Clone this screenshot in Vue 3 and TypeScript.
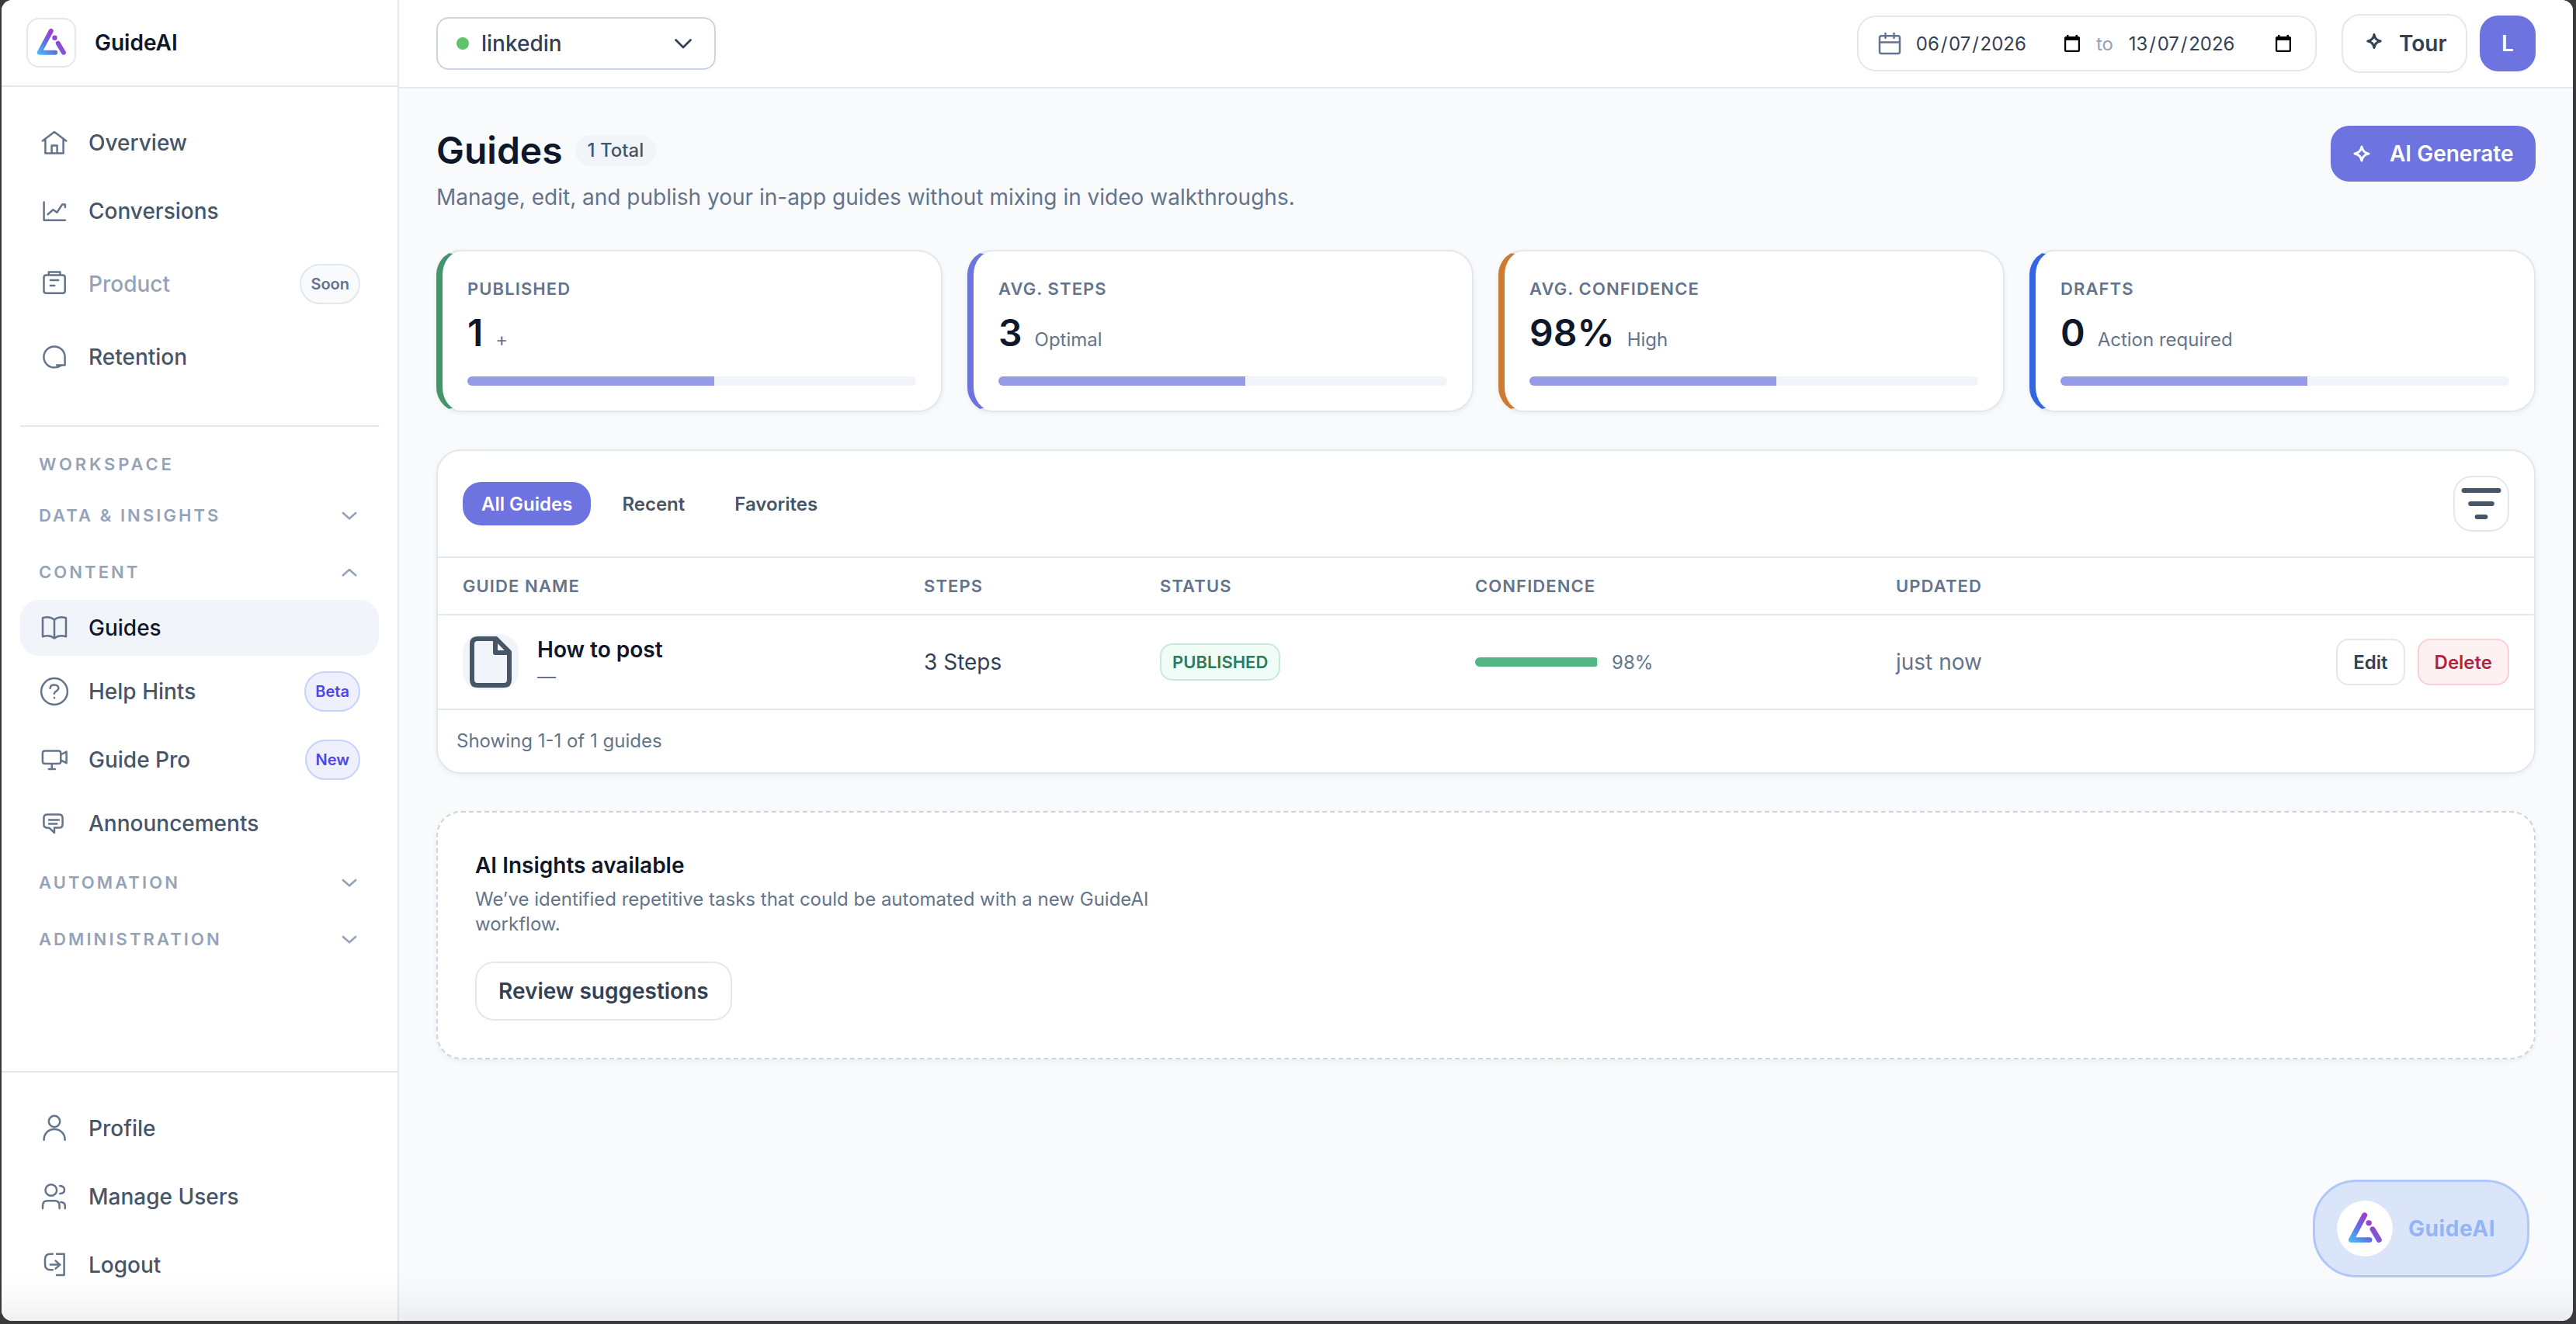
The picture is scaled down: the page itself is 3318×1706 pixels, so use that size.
<script setup lang="ts">
interface NavItem {
  label: string
  icon: string
  badge?: string
  tone?: 'muted' | 'accent'
  disabled?: boolean
  active?: boolean
}

interface Stat {
  label: string
  value: string
  hint: string
  color: string
  fill: number
}

// Stroke paths on a 40 x 40 grid
const icons: Record<string, string> = {
  home: 'M4.8 17.6 20 6 35.2 17.6M8.4 15.2V33.4H31.6V15.2M16.6 33.4V23.6H23.6V33.4',
  chart: 'M6.6 8.4V31.8H33.8M11.6 24.2 18.4 18.2 23.4 21.8 30.2 11.4M30.2 11.4H33.9V15',
  box: 'M9.6 8.6H30.6Q33.7 8.6 33.7 11.7V28.7Q33.7 31.8 30.6 31.8H9.6Q6.5 31.8 6.5 28.7V11.7Q6.5 8.6 9.6 8.6ZM12.8 8.4V4.6H27.4V8.4M14.8 15H25.2M14.8 21.9H20.2',
  loop: 'M33.6 20A13.6 13.6 0 1 0 20 33.6Q25 33.6 29.6 30.5M33.6 20V30.4H23',
  book: 'M20 9.6C16 6.2 10 5.8 5 7.2V31.2C10 29.8 16 30.2 20 33.4C24 30.2 30 29.8 35 31.2V7.2C30 5.8 24 6.2 20 9.6ZM20 9.6V33.4',
  help: 'M20 3.1A16.9 16.9 0 1 1 20 36.9A16.9 16.9 0 1 1 20 3.1ZM14.6 15.8C14.8 12.9 17.2 11.6 20 11.6C23.2 11.6 25.4 13.4 25.4 16C25.4 19.6 20.2 19.2 19.8 22.8M20 28V28.3',
  video: 'M8 8.4H25.2Q28.3 8.4 28.3 11.5V22Q28.3 25.1 25.2 25.1H8Q4.9 25.1 4.9 22V11.5Q4.9 8.4 8 8.4ZM29 13 35.6 9.6V24.2L29 20.8M16.8 25.2V32M12.8 32H20.8',
  message: 'M11 8.4H26Q30.6 8.4 30.6 13V21Q30.6 25.6 26 25.6H20V32L13.6 25.8H11Q6.4 25.6 6.4 21V13Q6.4 8.4 11 8.4ZM13 15.4H25.8M13 20.4H23.2',
  user: 'M20 3.8A7.2 7.2 0 1 1 20 18.2A7.2 7.2 0 1 1 20 3.8ZM6.6 34.8C6.6 26.4 12.6 20.9 20 20.9C27.4 20.9 33.6 26.4 33.6 34.8',
  users: 'M15.8 4.2A7.3 7.3 0 1 1 15.8 18.8A7.3 7.3 0 1 1 15.8 4.2ZM5 35V31.4Q5 25.2 11.2 25.2H20.4Q26.6 25.2 26.6 31.4V35M27.2 5.9Q33 6.4 33 11Q33 15.6 27.2 16.1M28.4 27Q33.8 27.4 33.8 32V35',
  logout: 'M17.8 5.8H15Q8 5.8 8 12.8V19.2Q8 26.2 15 26.2H17.8M23 5.8H32.6V33H23M14.8 19.6H27M21.6 14.6 27.4 19.6 21.6 24.6',
}

const primary: NavItem[] = [
  { label: 'Overview', icon: 'home' },
  { label: 'Conversions', icon: 'chart' },
  { label: 'Product', icon: 'box', badge: 'Soon', tone: 'muted', disabled: true },
  { label: 'Retention', icon: 'loop' },
]

const content: NavItem[] = [
  { label: 'Guides', icon: 'book', active: true },
  { label: 'Help Hints', icon: 'help', badge: 'Beta', tone: 'accent' },
  { label: 'Guide Pro', icon: 'video', badge: 'New', tone: 'accent' },
  { label: 'Announcements', icon: 'message' },
]

const account: NavItem[] = [
  { label: 'Profile', icon: 'user' },
  { label: 'Manage Users', icon: 'users' },
  { label: 'Logout', icon: 'logout' },
]

const stats: Stat[] = [
  { label: 'Published', value: '1', hint: '+', color: '#44946c', fill: 55 },
  { label: 'Avg. Steps', value: '3', hint: 'Optimal', color: '#6d73df', fill: 55 },
  { label: 'Avg. Confidence', value: '98%', hint: 'High', color: '#cc7b30', fill: 55 },
  { label: 'Drafts', value: '0', hint: 'Action required', color: '#3366e3', fill: 55 },
]

const tabs: string[] = ['All Guides', 'Recent', 'Favorites']
const dates: string[][] = [['06', '07', '2026'], ['13', '07', '2026']]
const confidence = 98
</script>

<template>
  <div class="desktop">
    <svg class="defs" width="0" height="0" aria-hidden="true">
      <defs>
        <linearGradient id="brand" gradientUnits="userSpaceOnUse" x1="5" y1="34" x2="29" y2="9">
          <stop offset="0" stop-color="#4cb4f6" />
          <stop offset="0.45" stop-color="#5f70e0" />
          <stop offset="0.8" stop-color="#9445d2" />
          <stop offset="1" stop-color="#ae37cb" />
        </linearGradient>
        <symbol id="logo" viewBox="0 0 40 40">
          <g fill="none" stroke="url(#brand)" stroke-width="6" stroke-linecap="round" stroke-linejoin="round">
            <path d="M19.7 5 4.8 32.7H25.2" />
            <path d="M28.7 20.7 35.9 32.7" />
          </g>
          <circle cx="24.5" cy="13.8" r="3.2" fill="url(#brand)" />
        </symbol>
      </defs>
    </svg>

    <div class="window">
      <aside class="sidebar">
        <div class="brand">
          <span class="brand-mark"><svg width="40" height="40"><use href="#logo" /></svg></span>
          <span class="brand-name">GuideAI</span>
        </div>

        <nav class="nav">
          <div class="group primary">
            <a v-for="item in primary" :key="item.label" class="item" :class="{ disabled: item.disabled, tall: item.badge }">
              <svg class="icon" viewBox="0 0 40 40"><path :d="icons[item.icon]" /></svg>
              <span class="item-label">{{ item.label }}</span>
              <span v-if="item.badge" class="badge" :class="item.tone">{{ item.badge }}</span>
            </a>
          </div>

          <div class="section-title">Workspace</div>
          <div class="toggle">
            <span>Data &amp; Insights</span>
            <svg width="24" height="24" viewBox="0 0 24 24"><path d="M3.8 9 12 16.3 20.2 9" /></svg>
          </div>
          <div class="toggle">
            <span>Content</span>
            <svg width="24" height="24" viewBox="0 0 24 24"><path d="M3.8 16.3 12 9 20.2 16.3" /></svg>
          </div>
          <div class="group content">
            <a v-for="item in content" :key="item.label" class="item" :class="{ active: item.active, tall: item.badge }">
              <svg class="icon" viewBox="0 0 40 40"><path :d="icons[item.icon]" /></svg>
              <span class="item-label">{{ item.label }}</span>
              <span v-if="item.badge" class="badge" :class="item.tone">{{ item.badge }}</span>
            </a>
          </div>
          <div class="toggle after">
            <span>Automation</span>
            <svg width="24" height="24" viewBox="0 0 24 24"><path d="M3.8 9 12 16.3 20.2 9" /></svg>
          </div>
          <div class="toggle">
            <span>Administration</span>
            <svg width="24" height="24" viewBox="0 0 24 24"><path d="M3.8 9 12 16.3 20.2 9" /></svg>
          </div>
        </nav>

        <div class="account">
          <a v-for="item in account" :key="item.label" class="item">
            <svg class="icon" viewBox="0 0 40 40"><path :d="icons[item.icon]" /></svg>
            <span class="item-label">{{ item.label }}</span>
          </a>
        </div>
      </aside>

      <div class="main">
        <header class="topbar">
          <button class="select">
            <span class="dot"></span>
            <span class="select-label">linkedin</span>
            <svg width="32" height="32" viewBox="0 0 32 32"><path d="M6.5 11.5 16 21 25.5 11.5" /></svg>
          </button>

          <div class="tools">
            <div class="range">
              <svg class="cal" width="32" height="32" viewBox="0 0 32 32">
                <path d="M5.5 6.2H26.5Q29 6.2 29 8.7V26.5Q29 29 26.5 29H5.5Q3 29 3 26.5V8.7Q3 6.2 5.5 6.2ZM3 14.5H29M10.5 3V9M21.5 3V9" />
              </svg>
              <template v-for="(date, i) in dates" :key="i">
                <span v-if="i" class="to">to</span>
                <span class="date" :class="{ second: i }">
                  <span class="value"><i>{{ date[0] }}</i>/<i>{{ date[1] }}</i>/<i>{{ date[2] }}</i></span>
                  <svg width="20" height="22" viewBox="0 0 20 22">
                    <path fill-rule="evenodd" d="M3 0H5.5V2H14.5V0H17V2H18Q20 2 20 4V20Q20 22 18 22H2Q0 22 0 20V4Q0 2 2 2H3ZM2.2 7V19.8H17.8V7Z" />
                  </svg>
                </span>
              </template>
            </div>
            <button class="tour">
              <svg class="spark" width="32" height="32" viewBox="0 0 32 32"><path d="M16 7.4Q17.2 14.8 24.2 16Q17.2 17.2 16 24.6Q14.8 17.2 7.8 16Q14.8 14.8 16 7.4Z" /></svg>
              <span>Tour</span>
            </button>
            <span class="avatar">L</span>
          </div>
        </header>

        <main class="page">
          <div class="heading">
            <div>
              <div class="title-row">
                <h1>Guides</h1>
                <span class="count">1 Total</span>
              </div>
              <p class="subtitle">Manage, edit, and publish your in-app guides without mixing in video walkthroughs.</p>
            </div>
            <button class="generate">
              <svg class="spark" width="32" height="32" viewBox="0 0 32 32"><path d="M16 7Q17.4 14.6 25 16Q17.4 17.4 16 25Q14.6 17.4 7 16Q14.6 14.6 16 7Z" /></svg>
              <span>AI Generate</span>
            </button>
          </div>

          <section class="stats">
            <article v-for="stat in stats" :key="stat.label" class="stat" :style="{ borderLeftColor: stat.color }">
              <div class="stat-label">{{ stat.label }}</div>
              <div class="stat-row">
                <span class="stat-value">{{ stat.value }}</span>
                <span class="stat-hint">{{ stat.hint }}</span>
              </div>
              <div class="track"><div class="fill" :style="{ width: stat.fill + '%' }"></div></div>
            </article>
          </section>

          <section class="panel">
            <div class="toolbar">
              <div class="tabs">
                <button v-for="(tab, i) in tabs" :key="tab" class="tab" :class="{ on: i === 0 }">{{ tab }}</button>
              </div>
              <button class="filter">
                <svg width="60" height="60" viewBox="0 0 60 60"><path d="M7.5 13H52.5M16.2 30H43.8M24.6 47H35.4" /></svg>
              </button>
            </div>
            <div class="row head">
              <span>Guide name</span><span>Steps</span><span>Status</span><span>Confidence</span><span>Updated</span><span></span>
            </div>
            <div class="row body">
              <div class="guide">
                <span class="guide-icon">
                  <svg width="72" height="72" viewBox="0 0 72 72"><path d="M43 6H19Q12 6 12 13V59Q12 66 19 66H53Q60 66 60 59V23ZM42 6V24H60" /></svg>
                </span>
                <div class="guide-text">
                  <strong>How to post</strong>
                  <small>—</small>
                </div>
              </div>
              <span class="steps">3 Steps</span>
              <span><span class="status">PUBLISHED</span></span>
              <div class="confidence">
                <div class="meter"><div :style="{ width: confidence + '%' }"></div></div>
                <span>{{ confidence }}%</span>
              </div>
              <span class="updated">just now</span>
              <div class="actions">
                <button class="edit">Edit</button>
                <button class="delete">Delete</button>
              </div>
            </div>
            <div class="summary">Showing 1-1 of 1 guides</div>
          </section>

          <section class="insights">
            <h2>AI Insights available</h2>
            <p>We’ve identified repetitive tasks that could be automated with a new GuideAI workflow.</p>
            <button class="review">Review suggestions</button>
          </section>
        </main>
      </div>

      <div class="dock-shade"></div>
      <button class="assistant">
        <span class="assistant-mark"><svg width="46" height="46"><use href="#logo" /></svg></span>
        <span>GuideAI</span>
      </button>
    </div>
  </div>
</template>

<style>
body {
  margin: 0;
  background: #3a3a3d;
}
</style>

<style scoped>
* {
  box-sizing: border-box;
}

.desktop {
  width: 3318px;
  height: 1706px;
  padding: 0 4px 4px 2px;
  background: #3a3a3d;
  overflow: hidden;
  font-family: Inter, "Liberation Sans", sans-serif;
  font-optical-sizing: none;
  font-size: 28px;
  color: #334155;
  -webkit-font-smoothing: antialiased;
}

.defs {
  position: absolute;
}

.window {
  position: relative;
  display: flex;
  width: 3312px;
  height: 1702px;
  border-radius: 14px;
  overflow: hidden;
  background: #f8fafc;
}

button {
  font: inherit;
  color: inherit;
  margin: 0;
  padding: 0;
  border: 0;
  background: none;
}

svg {
  display: block;
  flex: none;
}

/* Sidebar */
.sidebar {
  display: flex;
  flex-direction: column;
  width: 512px;
  flex: none;
  background: #fff;
  border-right: 2px solid #e2e8f0;
}

.brand {
  display: flex;
  align-items: center;
  gap: 24px;
  height: 112px;
  flex: none;
  padding-left: 32px;
  border-bottom: 2px solid #e2e8f0;
}

.brand-mark {
  display: flex;
  align-items: center;
  justify-content: center;
  width: 64px;
  height: 64px;
  border: 2px solid #e2e8f0;
  border-radius: 16px;
}

.brand-name {
  font-weight: 600;
  color: #0f172a;
}

.nav {
  flex: 1;
  padding: 36px 24px 0;
}

.group {
  display: flex;
  flex-direction: column;
}

.primary {
  gap: 16px;
  padding-bottom: 52px;
  border-bottom: 2px solid #e2e8f0;
}

.content {
  gap: 4px;
}

.item {
  display: flex;
  align-items: center;
  gap: 24px;
  height: 72px;
  padding: 0 24px;
  border-radius: 24px;
  font-weight: 500;
  color: #475569;
}

.item.tall {
  height: 84px;
}

.item.disabled {
  color: #94a3b8;
}

.item.active {
  background: #f1f5f9;
  color: #0f172a;
}

.item-label {
  flex: 1;
}

.icon {
  width: 40px;
  height: 40px;
  fill: none;
  stroke: #64748b;
  stroke-width: 2.5;
  stroke-linecap: round;
  stroke-linejoin: round;
}

.badge {
  display: flex;
  align-items: center;
  height: 52px;
  padding: 0 12px;
  border: 2px solid #e2e8f0;
  border-radius: 26px;
  background: #f8fafc;
  color: #64748b;
  font-size: 20px;
  font-weight: 600;
}

.badge.accent {
  border-color: #c7d2fe;
  background: #eef0fe;
  color: #4f46e5;
}

.section-title,
.toggle {
  display: flex;
  align-items: center;
  justify-content: space-between;
  padding: 0 26px 0 24px;
  font-size: 22px;
  font-weight: 600;
  letter-spacing: 0.14em;
  text-transform: uppercase;
  color: #94a3b8;
}

.section-title {
  height: 28px;
  margin: 34px 0 15px;
  letter-spacing: 0.175em;
}

.toggle {
  height: 73px;
}

.toggle.after {
  margin-top: 3px;
}

.toggle svg {
  fill: none;
  stroke: #94a3b8;
  stroke-width: 2.6;
  stroke-linecap: round;
  stroke-linejoin: round;
}

.account {
  display: flex;
  flex-direction: column;
  gap: 16px;
  height: 322px;
  flex: none;
  padding: 36px 24px 0;
  border-top: 2px solid #e2e8f0;
}

/* Top bar */
.main {
  display: flex;
  flex-direction: column;
  flex: 1;
  min-width: 0;
}

.topbar {
  display: flex;
  align-items: center;
  justify-content: space-between;
  height: 114px;
  flex: none;
  padding: 0 48px;
  background: #fff;
  border-bottom: 2px solid #e2e8f0;
}

.select {
  display: flex;
  align-items: center;
  gap: 16px;
  width: 360px;
  height: 68px;
  padding: 0 24px;
  border: 2px solid #cbd5e1;
  border-radius: 16px;
  background: #fff;
  font-weight: 500;
}

.dot {
  width: 16px;
  height: 16px;
  border-radius: 50%;
  background: #60c46c;
}

.select-label {
  flex: 1;
  text-align: left;
}

.select svg,
.cal {
  fill: none;
  stroke: #334155;
  stroke-width: 2.8;
  stroke-linecap: round;
  stroke-linejoin: round;
}

.tools {
  display: flex;
  align-items: center;
}

.range {
  display: flex;
  align-items: center;
  width: 592px;
  height: 72px;
  margin-right: 32px;
  padding-left: 24px;
  border: 2px solid #e2e8f0;
  border-radius: 24px;
  font-size: 24px;
}

.range .cal {
  stroke: #64748b;
  stroke-width: 2.5;
  margin-right: 16px;
}

.date {
  display: flex;
  align-items: center;
  width: 213px;
  justify-content: space-between;
}

.date.second {
  width: 211px;
}

.value {
  white-space: nowrap;
}

.value i {
  font-style: normal;
  padding: 0 1.8px;
}

.date svg {
  fill: #000;
}

.to {
  width: 24px;
  margin: 0 16px 0 21px;
  color: #94a3b8;
}

.tour {
  display: flex;
  align-items: center;
  width: 162px;
  height: 76px;
  margin-right: 16px;
  padding-left: 24px;
  border: 2px solid #e2e8f0;
  border-radius: 24px;
  font-weight: 600;
}

.spark {
  fill: none;
  stroke: currentColor;
  stroke-width: 3;
  stroke-linejoin: round;
}

.tour .spark {
  margin: 0 16px 6px 0;
}

.avatar {
  display: flex;
  align-items: center;
  justify-content: center;
  width: 72px;
  height: 72px;
  border-radius: 24px;
  background: #6d73df;
  color: #fff;
  font-size: 28px;
  font-weight: 600;
}

/* Page */
.page {
  padding: 48px 48px 0;
}

.heading {
  display: flex;
  justify-content: space-between;
  align-items: flex-start;
  height: 160px;
}

.title-row {
  display: flex;
  align-items: center;
  gap: 16px;
  height: 64px;
}

h1 {
  margin: 0;
  font-size: 48px;
  line-height: 64px;
  font-weight: 600;
  color: #0f172a;
}

.count {
  height: 40px;
  padding: 0 16px;
  border-radius: 20px;
  background: #f1f5f9;
  color: #475569;
  font-size: 24px;
  font-weight: 500;
  line-height: 40px;
}

.subtitle {
  margin: 8px 0 0;
  line-height: 40px;
  color: #64748b;
}

.generate {
  display: flex;
  align-items: center;
  gap: 20px;
  width: 264px;
  height: 72px;
  padding-left: 24px;
  border-radius: 24px;
  background: #6d73df;
  color: #fff;
  font-weight: 600;
  white-space: nowrap;
}

.stats {
  display: grid;
  grid-template-columns: repeat(4, 1fr);
  gap: 32px;
}

.stat {
  height: 209px;
  padding: 32px 32px 0;
  border: 2px solid #e2e8f0;
  border-left-width: 8px;
  border-radius: 32px;
  background: #fff;
  box-shadow: 0 2px 6px rgba(15, 23, 42, 0.06);
}

.stat-label {
  height: 32px;
  line-height: 32px;
  font-size: 22px;
  font-weight: 600;
  letter-spacing: 0.05em;
  text-transform: uppercase;
  color: #64748b;
}

.stat-row {
  display: flex;
  align-items: baseline;
  gap: 16px;
  height: 64px;
  margin-top: 9px;
  line-height: 64px;
}

.stat-value {
  font-size: 48px;
  font-weight: 600;
  color: #0f172a;
}

.stat-hint {
  font-size: 24px;
  color: #64748b;
}

.track {
  height: 12px;
  margin-top: 24px;
  border-radius: 6px;
  background: #f1f5f9;
  overflow: hidden;
}

.fill {
  height: 100%;
  background: #959ae6;
}

.panel {
  margin-top: 48px;
  border: 2px solid #e2e8f0;
  border-radius: 32px;
  background: #fff;
  box-shadow: 0 2px 6px rgba(15, 23, 42, 0.06);
}

.toolbar {
  display: flex;
  align-items: center;
  justify-content: space-between;
  height: 138px;
  padding: 0 32px;
  border-bottom: 2px solid #e2e8f0;
}

.tabs {
  display: flex;
  gap: 16px;
}

.tab {
  height: 56px;
  padding: 0 24px;
  border-radius: 24px;
  font-size: 24px;
  font-weight: 600;
  color: #475569;
}

.tab.on {
  background: #6d73df;
  color: #fff;
}

.filter {
  display: flex;
  align-items: center;
  justify-content: center;
  width: 72px;
  height: 72px;
  border: 2px solid #e2e8f0;
  border-radius: 24px;
}

.filter svg {
  fill: none;
  stroke: #475569;
  stroke-width: 6;
  stroke-linecap: round;
}

.row {
  display: grid;
  grid-template-columns: 594px 304px 406px 542px 330px 1fr;
  align-items: center;
  padding: 0 32px;
  border-bottom: 2px solid #e2e8f0;
}

.head {
  height: 74px;
  font-size: 22px;
  font-weight: 600;
  letter-spacing: 0.05em;
  text-transform: uppercase;
  color: #64748b;
}

.body {
  height: 122px;
}

.guide {
  display: flex;
  align-items: center;
  gap: 24px;
}

.guide-icon {
  width: 72px;
  height: 72px;
  border-radius: 24px;
  background: #f1f5f9;
}

.guide-icon svg {
  fill: none;
  stroke: #475569;
  stroke-width: 6;
  stroke-linejoin: round;
}

.guide-text {
  display: flex;
  flex-direction: column;
}

.guide-text strong {
  line-height: 38px;
  font-weight: 600;
  color: #0f172a;
}

.guide-text small {
  line-height: 32px;
  font-size: 24px;
  color: #64748b;
}

.status {
  display: inline-flex;
  align-items: center;
  height: 48px;
  padding: 0 14px;
  border: 2px solid #c8e8da;
  border-radius: 16px;
  background: #f0fdf7;
  color: #2f7a57;
  font-size: 22px;
  font-weight: 600;
}

.confidence {
  display: flex;
  align-items: center;
  gap: 16px;
  font-size: 24px;
  color: #64748b;
}

.meter {
  width: 160px;
  height: 12px;
  border-radius: 6px;
  background: #e8edf3;
  overflow: hidden;
}

.meter div {
  height: 100%;
  background: #55b585;
}

.updated {
  color: #64748b;
}

.actions {
  display: flex;
  justify-content: flex-end;
  gap: 16px;
  font-size: 24px;
  font-weight: 600;
}

.edit,
.delete {
  height: 60px;
  padding: 0 20px;
  border: 2px solid #e2e8f0;
  border-radius: 16px;
}

.delete {
  border-color: #fbcfd5;
  background: #fdf1f2;
  color: #b0243f;
}

.summary {
  height: 80px;
  padding-left: 24px;
  font-size: 24px;
  line-height: 80px;
  color: #64748b;
}

.insights {
  height: 320px;
  margin-top: 48px;
  padding: 48px;
  border: 2px dashed #cbd5e1;
  border-radius: 32px;
  background: #fff;
  box-shadow: 0 2px 6px rgba(15, 23, 42, 0.06);
}

h2 {
  margin: 0;
  font-size: 28px;
  font-weight: 600;
  line-height: 40px;
  color: #0f172a;
}

.insights p {
  width: 900px;
  margin: 8px 0 32px;
  font-size: 24px;
  line-height: 32px;
  color: #64748b;
}

.review {
  height: 76px;
  padding: 0 28px;
  border: 2px solid #e2e8f0;
  border-radius: 24px;
  font-weight: 600;
}

/* Overlays */
.dock-shade {
  position: absolute;
  left: 0;
  right: 0;
  bottom: 0;
  height: 64px;
  background: linear-gradient(to bottom, rgba(0, 0, 0, 0), rgba(0, 0, 0, 0.015) 45%, rgba(0, 0, 0, 0.055));
  pointer-events: none;
}

.assistant {
  position: absolute;
  right: 56px;
  bottom: 56px;
  display: flex;
  align-items: center;
  gap: 20px;
  width: 279px;
  height: 126px;
  padding-left: 28px;
  border: 3px solid #afc8f9;
  border-radius: 56px;
  background: #dae5f9;
  color: #94b4f6;
  font-weight: 700;
  letter-spacing: 0.02em;
}

.assistant-mark {
  display: flex;
  align-items: center;
  justify-content: center;
  width: 72px;
  height: 72px;
  border-radius: 50%;
  background: #fff;
}
</style>
